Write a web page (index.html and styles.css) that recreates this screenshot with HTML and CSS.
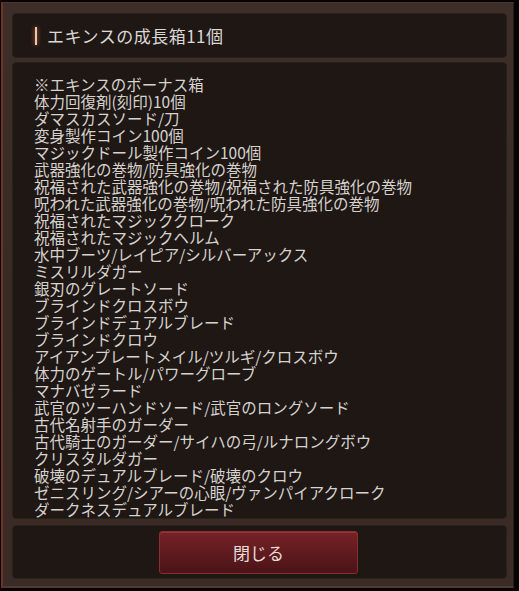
FILE: index.html
```html
<!DOCTYPE html>
<html lang="ja">
<head>
<meta charset="utf-8">
<link rel="stylesheet" href="styles.css">
</head>
<body>
<div class="frame">
  <div class="panel header">
    <span class="bar"></span>
    <span class="title">エキンスの成長箱11個</span>
  </div>
  <div class="panel list">
    <div>※エキンスのボーナス箱</div>
    <div>体力回復剤(刻印)10個</div>
    <div>ダマスカスソード/刀</div>
    <div>変身製作コイン100個</div>
    <div>マジックドール製作コイン100個</div>
    <div>武器強化の巻物/防具強化の巻物</div>
    <div>祝福された武器強化の巻物/祝福された防具強化の巻物</div>
    <div>呪われた武器強化の巻物/呪われた防具強化の巻物</div>
    <div>祝福されたマジッククローク</div>
    <div>祝福されたマジックヘルム</div>
    <div>水中ブーツ/レイピア/シルバーアックス</div>
    <div>ミスリルダガー</div>
    <div>銀刃のグレートソード</div>
    <div>ブラインドクロスボウ</div>
    <div>ブラインドデュアルブレード</div>
    <div>ブラインドクロウ</div>
    <div>アイアンプレートメイル/ツルギ/クロスボウ</div>
    <div>体力のゲートル/パワーグローブ</div>
    <div>マナバゼラード</div>
    <div>武官のツーハンドソード/武官のロングソード</div>
    <div>古代名射手のガーダー</div>
    <div>古代騎士のガーダー/サイハの弓/ルナロングボウ</div>
    <div>クリスタルダガー</div>
    <div>破壊のデュアルブレード/破壊のクロウ</div>
    <div>ゼニスリング/シアーの心眼/ヴァンパイアクローク</div>
    <div>ダークネスデュアルブレード</div>
  </div>
  <div class="panel footer">
    <button class="close">閉じる</button>
  </div>
</div>
</body>
</html>
```
FILE: styles.css
```css
html, body {
  margin: 0;
  padding: 0;
  background: #050303;
}
body {
  width: 519px;
  height: 591px;
  overflow: hidden;
  font-family: "Noto Sans CJK JP", "Noto Sans", sans-serif;
}
.frame {
  box-sizing: border-box;
  margin: 2px 0 0 1px;
  width: 513px;
  height: 586px;
  padding: 10px 6px 10px 10px;
  background: linear-gradient(180deg, #3d2e29 0%, #382a25 50%, #3a2b26 100%);
  border-top: 1px solid #4a3830;
  border-left: 2px solid #6e3426;
  border-right: 1px solid #2a1e1a;
  border-bottom: 2px solid #4d3a31;
  display: flex;
  flex-direction: column;
  gap: 4px;
}
.panel {
  background: #1e1714;
  border-radius: 5px;
  box-shadow: inset 0 0 0 1px #2a201c;
}
.header {
  height: 45px;
  flex: none;
  display: flex;
  align-items: center;
  padding-left: 23px;
  margin-left: -1px;
}
.bar {
  width: 2px;
  height: 18px;
  background: #f0c4a8;
  box-shadow: 0 0 4px #c0704a;
  margin-right: 10px;
}
.title {
  color: #dcd8d4;
  font-size: 17px;
  letter-spacing: 0.5px;
}
.list {
  height: 457px;
  flex: none;
  box-sizing: border-box;
  padding: 14px 0 0 22px;
  margin-left: -1px;
  overflow: hidden;
  color: #d6d2ce;
  font-size: 15.5px;
  line-height: 17px;
}
.footer {
  margin-top: 2px;
  height: 54px;
  flex: none;
  display: flex;
  justify-content: center;
  align-items: flex-start;
  padding-top: 6px;
  box-sizing: border-box;
  margin-left: -1px;
}
.close {
  width: 199px;
  height: 43px;
  border: 1px solid #8c2c2e;
  border-radius: 3px;
  background: linear-gradient(180deg, #762226 0%, #5e1a1e 55%, #4a1417 100%);
  box-shadow: inset 0 1px 0 #923438;
  color: #e6dcd8;
  font-family: "Noto Sans CJK JP", "Noto Sans", sans-serif;
  font-size: 17px;
  padding: 0;
  margin-left: -2px;
}
```
